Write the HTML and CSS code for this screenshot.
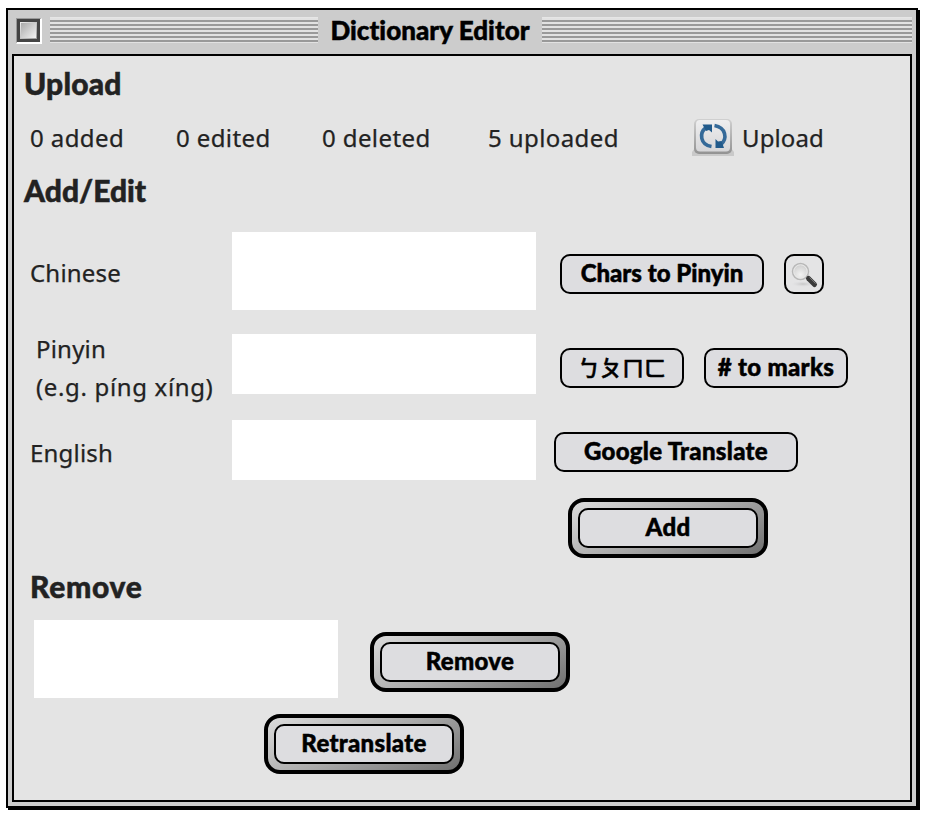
FILE: index.html
```
<!DOCTYPE html>
<html lang="en">
<head>
<meta charset="utf-8">
<title>Dictionary Editor</title>
<link rel="stylesheet" href="styles.css">
</head>
<body>
<main class="window">
  <header class="titlebar">
    <span class="close-box"></span>
    <span class="stripes stripes-left"></span>
    <h1 class="title">Dictionary Editor</h1>
    <span class="stripes stripes-right"></span>
  </header>
  <div class="content">
    <h2 class="heading heading-upload">Upload</h2>
    <div class="stats">
      <span class="stat-added">0 added</span>
      <span class="stat-edited">0 edited</span>
      <span class="stat-deleted">0 deleted</span>
      <span class="stat-uploaded">5 uploaded</span>
      <svg class="sync-icon" viewBox="0 0 42 40" width="42" height="40">
        <defs>
          <linearGradient id="key" x1="0" y1="0" x2="0" y2="1"><stop offset="0" stop-color="#eeeeef"/><stop offset="1" stop-color="#d6d6d8"/></linearGradient>
          <linearGradient id="edge" x1="0" y1="0" x2="0" y2="1"><stop offset="0" stop-color="#d0d0d0"/><stop offset="1" stop-color="#929292"/></linearGradient>
        </defs>
        <path d="M0 38V34L3 30H39L42 34V38Z" fill="#c9c9c9"/>
        <rect x="2" y="1" width="38" height="35" rx="5" fill="url(#edge)"/>
        <rect x="4" y="2" width="34" height="31.5" rx="4" fill="url(#key)"/>
        <path d="M19.500 28.500C8 26.500 7 15 14 9.500M22.500 7.500C34 9.500 35.500 20.500 29 26.500" fill="none" stroke="#356a99" stroke-width="3.600"/>
        <path d="M10.500 6.500H20V14.500L17 12L14 13Z" fill="#215a8b"/>
        <path d="M23.500 21L26 23.500L29.500 23L32 30H23.500Z" fill="#215a8b"/>
      </svg>
      <span>Upload</span>
    </div>
    <h2 class="heading heading-edit">Add/Edit</h2>
    <div class="row row-chinese">
      <label class="label" for="chinese">Chinese</label>
      <textarea class="field" id="chinese"></textarea>
      <button class="button chars">Chars to Pinyin</button>
      <button class="button search" aria-label="Search">
        <svg viewBox="0 0 36 36" width="36" height="36">
          <defs>
            <radialGradient id="lens" cx=".5" cy=".7" r=".7"><stop offset="0" stop-color="#f2f2f2"/><stop offset="1" stop-color="#cacaca"/></radialGradient>
            <radialGradient id="shade"><stop offset="0" stop-color="#c5c5c5"/><stop offset="1" stop-color="#dddde0" stop-opacity="0"/></radialGradient>
          </defs>
          <ellipse cx="17" cy="28" rx="12" ry="3" fill="url(#shade)"/>
          <path d="M20 20L24 24" stroke="#aaa" stroke-width="3"/>
          <circle cx="14.500" cy="15.500" r="8" fill="url(#lens)" stroke="#b8b8b8" stroke-width="1.500"/>
          <circle cx="14.500" cy="15.500" r="6.700" fill="none" stroke="#e9e9e9"/>
          <path d="M22.500 22.500L28.500 28.500" stroke="#3a3a3a" stroke-width="5" stroke-linecap="round"/>
          <path d="M23.500 21.500L29.500 27.500" stroke="#777" stroke-width="1"/>
        </svg>
      </button>
    </div>
    <div class="row row-pinyin">
      <label class="label label-pinyin" for="pinyin">Pinyin<br><span class="example">(e.g. píng xíng)</span></label>
      <textarea class="field" id="pinyin"></textarea>
      <button class="button bopomofo" lang="zh-TW">ㄅㄆㄇㄈ</button>
      <button class="button marks"># to marks</button>
    </div>
    <div class="row row-english">
      <label class="label" for="english">English</label>
      <textarea class="field" id="english"></textarea>
      <button class="button google">Google Translate</button>
    </div>
    <button class="default-button add"><span class="button">Add</span></button>
    <h2 class="heading heading-remove">Remove</h2>
    <div class="row row-remove">
      <textarea class="field" aria-label="Remove"></textarea>
      <button class="default-button remove"><span class="button">Remove</span></button>
    </div>
    <button class="default-button retranslate"><span class="button">Retranslate</span></button>
  </div>
</main>
</body>
</html>
```
FILE: styles.css
```
* { box-sizing: border-box; }

body {
  margin: 0;
  padding: 8px 6px;
  background: #fff;
  color: #222;
  font: 24px/38px "Noto Sans", sans-serif;
  letter-spacing: .2px;
  -webkit-text-stroke: .25px;
}

h1, h2 { margin: 0; }

.window {
  width: 912px;
  height: 800px;
  padding: 0 4px 4px;
  border: 2px solid #000;
  background: #ccc;
  box-shadow: 2px 2px 0 #000;
}

.titlebar {
  display: flex;
  height: 44px;
  margin-right: -2px;
  padding: 7px 2px 0 4px;
}

.close-box {
  width: 26px;
  height: 26px;
  margin-top: 1px;
  border: 1px solid;
  border-width: 1px 2px 2px 1px;
  border-color: #999 #fff #fff #999;
  background: linear-gradient(135deg, #aaa, #f2f2f2) 4px 4px / 15px 15px no-repeat,
    linear-gradient(135deg, #eee, #999) 3px 3px / 17px 17px no-repeat, #444;
}

.stripes {
  height: 26px;
  border-top: 1px solid #e6e6e6;
  background: repeating-linear-gradient(#e2e2e2 0 2px, #999 2px 4px);
}
.stripes-left { width: 268px; margin-left: 8px; }
.stripes-right { width: 370px; }

.title {
  width: 224px;
  color: #000;
  font: 900 26px/26px Lato, sans-serif;
  letter-spacing: .05px;
  text-align: center;
  font-variant-ligatures: none;
  -webkit-text-stroke: .5px;
}

.content {
  width: 900px;
  height: 748px;
  padding: 7px 0 0 10px;
  border: 2px solid #000;
  background: #e4e4e4;
}

.heading {
  font: 900 30px/40px Lato, sans-serif;
  letter-spacing: 0;
  -webkit-text-stroke: .5px;
}
.heading-upload { letter-spacing: .2px; }
.heading-edit { margin-top: 12px; }
.heading-remove { margin: 8px 0 0 6px; letter-spacing: .7px; }

.stats {
  display: flex;
  align-items: center;
  height: 40px;
  margin: 15px 0 0 6px;
  letter-spacing: .4px;
  white-space: nowrap;
}
.stat-added { width: 146px; }
.stat-edited { width: 146px; }
.stat-deleted { width: 166px; }
.stat-uploaded { width: 204px; }
.sync-icon { margin-right: 8px; }
.sync-icon + span { letter-spacing: .1px; }

.row { display: flex; }
.row-chinese { height: 78px; margin-top: 22px; }
.row-pinyin { height: 60px; margin-top: 24px; }
.row-english { height: 60px; margin-top: 26px; }
.row-remove { height: 78px; margin: 14px 0 0 10px; }

.label { width: 208px; padding-left: 6px; white-space: nowrap; }
.row-chinese .label { padding-top: 22px; }
.row-english .label { padding-top: 14px; }
.label-pinyin { padding-left: 12px; margin-top: -4px; }
.example { letter-spacing: .65px; }

.field {
  display: block;
  width: 304px;
  height: 100%;
  padding: 8px;
  border: 0;
  background: #fff;
  resize: none;
}

.button {
  flex: none;
  height: 40px;
  padding: 0 0 3px;
  border: 2px solid #000;
  border-radius: 10px;
  background: #dddde0;
  color: #000;
  font: 900 24px/33px Lato, sans-serif;
  letter-spacing: .1px;
  text-align: center;
  font-variant-ligatures: none;
  -webkit-text-stroke: .5px;
}
.chars { width: 204px; margin: 22px 0 0 24px; letter-spacing: 0; }
.search { width: 40px; margin: 22px 0 0 20px; padding: 0; background: #e4e4e5; }
.search svg { display: block; }
.bopomofo {
  width: 124px;
  margin: 14px 0 0 24px;
  font: 500 22px/33px "Noto Sans CJK TC", sans-serif;
}
.marks { width: 144px; margin: 14px 0 0 20px; letter-spacing: .3px; }
.google { width: 244px; margin: 12px 0 0 18px; letter-spacing: .3px; }

.default-button {
  display: block;
  width: 200px;
  height: 60px;
  padding: 6px;
  border: 4px solid #000;
  border-radius: 16px;
  background: linear-gradient(155deg, #dcdcdc, #aaa 50%, #707070);
}
.default-button .button { display: block; letter-spacing: .3px; line-height: 34px; }
.add { margin: 18px 0 0 544px; }
.remove { margin: 12px 0 0 32px; }
.retranslate { margin: 16px 0 0 240px; }
```
